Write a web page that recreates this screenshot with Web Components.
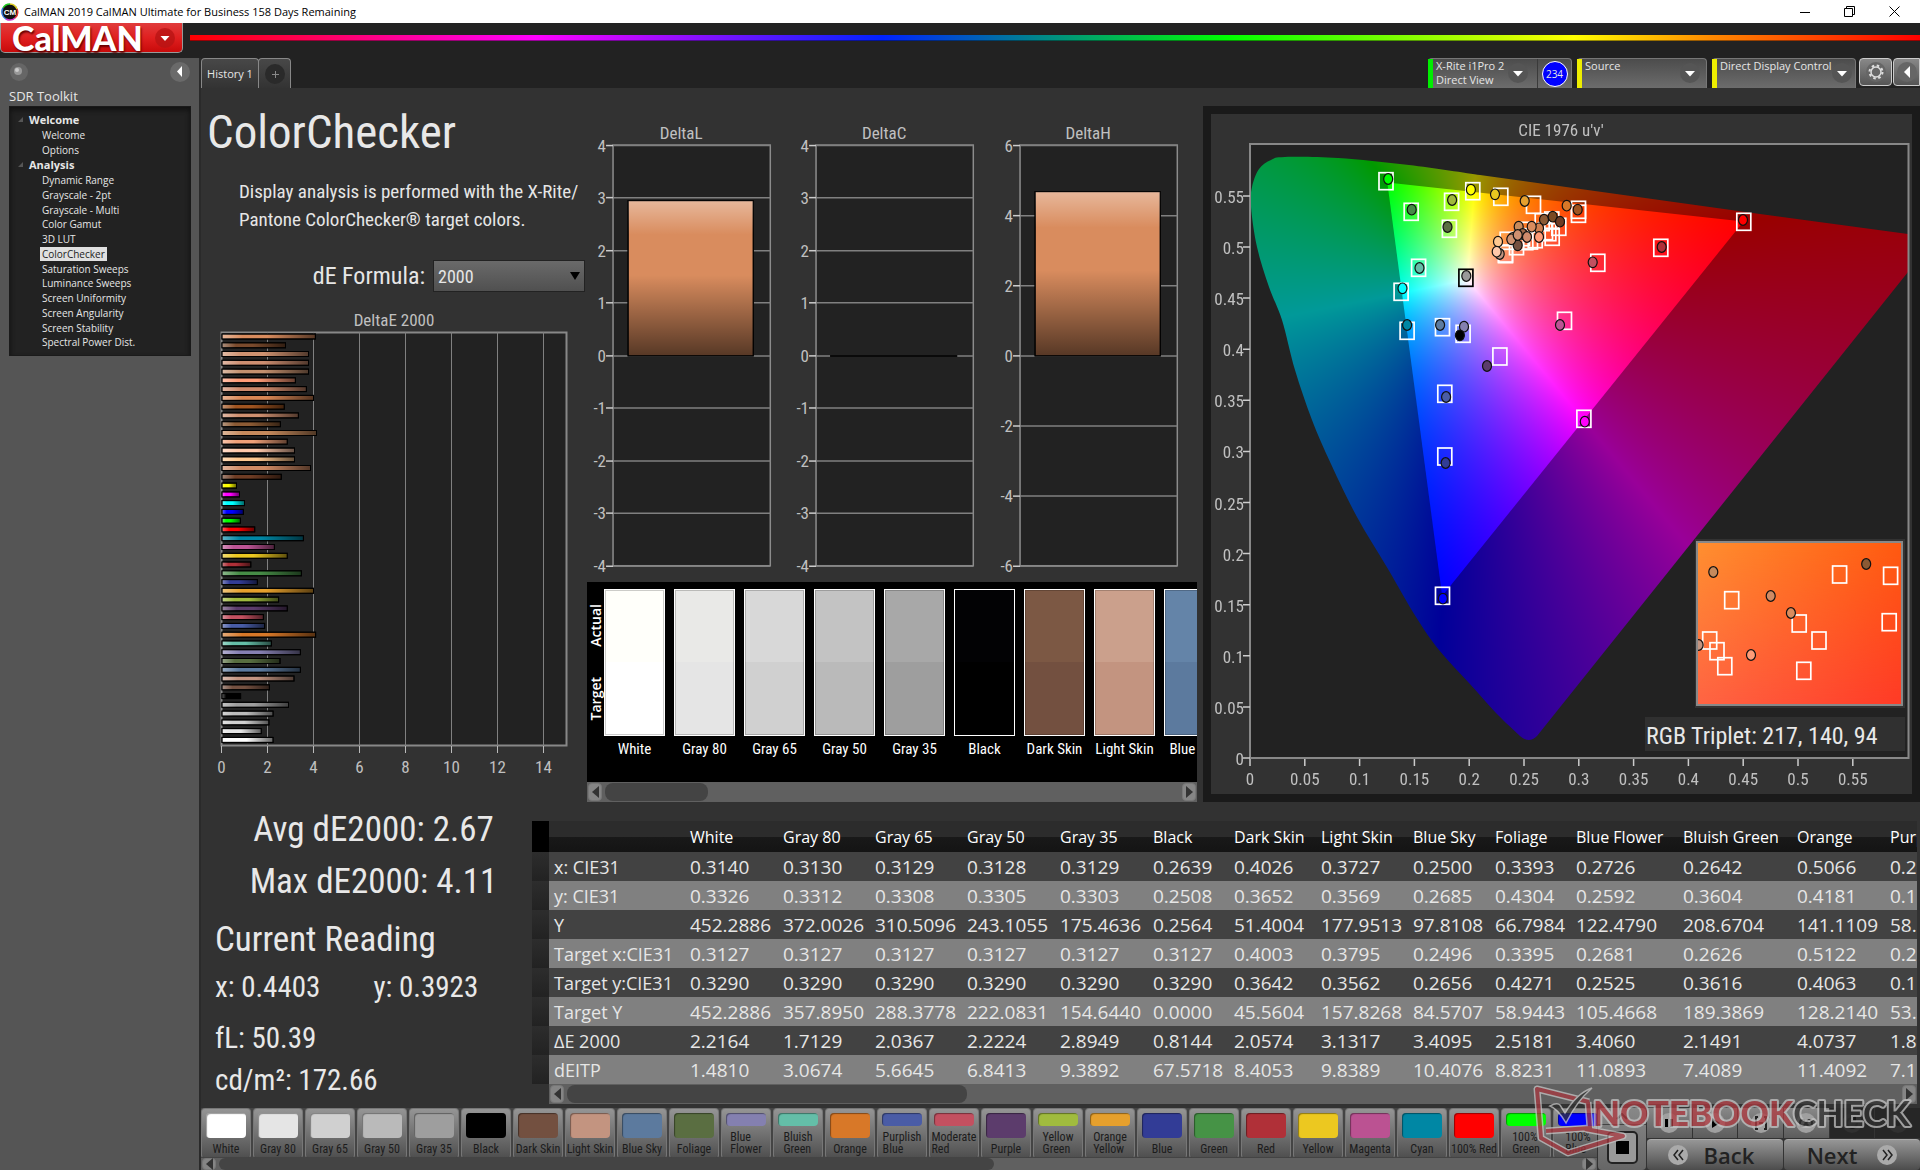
<!DOCTYPE html>
<html lang="en">
<head>
<meta charset="utf-8">
<title>CalMAN 2019 CalMAN Ultimate for Business 158 Days Remaining</title>
<style>
html,body{height:100%}
body{margin:0;background:#222;overflow:hidden;
--narrow:"Roboto Condensed","Open Sans Condensed",sans-serif;
--wide:"Open Sans","Noto Sans",sans-serif;
font-family:var(--narrow);color:#e6e6e6}
</style>
</head>
<body>
<calman-app></calman-app>
<script>
const BASE='*{box-sizing:border-box}button,select{font:inherit;color:inherit;margin:0;padding:0;border:0;background:none}';
function define(name,css,html,after){
  customElements.define(name,class extends HTMLElement{
    connectedCallback(){
      if(this.shadowRoot)return;
      const r=this.attachShadow({mode:'open'});
      r.innerHTML='<style>'+BASE+css+'</style>'+(typeof html==='function'?html(this):html);
      if(after)after(r,this);
    }
  });
}
const SHADE=(id,vert)=>`<linearGradient id="${id}" x1="0" y1="0" x2="${vert?0:1}" y2="${vert?1:0}"><stop offset="0" stop-color="#fff" stop-opacity=".38"/><stop offset=".22" stop-color="#fff" stop-opacity="0"/><stop offset=".48" stop-color="#000" stop-opacity="0"/><stop offset="1" stop-color="#000" stop-opacity=".6"/></linearGradient>`;

/* window title bar */
define('title-bar',`:host{display:flex;align-items:center;height:23px;background:#fff;color:#000;font:11px/23px var(--wide)}
svg{display:block}.n{margin-left:5px;flex:1}nav{display:flex}button{width:45px;height:23px;display:flex;align-items:center;justify-content:center}nav{margin-right:3px}`,
`<svg width="18" height="18" viewBox="0 0 18 18" style="margin-left:1px"><circle cx="9" cy="9" r="8" fill="#111"/><g fill="none" stroke-width="1.5"><path d="M2 5A8 8 0 0 1 9 1" stroke="#2c2"/><path d="M9 1A8 8 0 0 1 16 6" stroke="#dc2"/><path d="M16 6A8 8 0 0 1 14 15" stroke="#d33"/><path d="M14 15A8 8 0 0 1 5 16" stroke="#c3c"/><path d="M5 16A8 8 0 0 1 2 5" stroke="#37d"/></g><text x="9" y="12" text-anchor="middle" font-size="8" font-weight="700" fill="#fff" font-family="Liberation Sans">CM</text></svg>
<span class="n">CalMAN 2019 CalMAN Ultimate for Business 158 Days Remaining</span>
<nav><button aria-label="Minimize"><svg width="10" height="10"><path d="M0 5.500h10" stroke="#000"/></svg></button>
<button aria-label="Restore"><svg width="11" height="11" fill="none" stroke="#000"><path d="M.5 2.500h8v8h-8zM2.500 2.500v-2h8v8h-2"/></svg></button>
<button aria-label="Close"><svg width="11" height="11" stroke="#000"><path d="M.5.5l10 10M10.500.5l-10 10"/></svg></button></nav>`);

/* brand button and rainbow rule */
define('brand-bar',`:host{display:flex;height:35px;gap:7px;background:#222}
button{width:183px;height:30px;border:1px solid #999;border-top:0;border-radius:0 0 5px 5px;background:linear-gradient(#e03c3c,#e02020 50%,#c80a0a);color:#fff;font:900 34px/28px Lato,"Noto Sans",sans-serif;display:flex;align-items:center;justify-content:space-between;padding:0 7px 0 11px;text-shadow:1px 2px 2px #600}
svg{display:block}hr{flex:1;border:0;margin:12px 0 0;height:6px;border-bottom:1px solid #0006;background:linear-gradient(90deg,#f00,#f0f 20%,#02f 40%,#0f0 60%,#ff0 80%,#f80 88%,#f00)}`,
`<button><span>CalMAN</span><svg width="20" height="20"><circle cx="10" cy="10" r="10" fill="#b81414" opacity=".8"/><path d="M5.500 8h9l-4.500 5z" fill="#fff"/></svg></button><hr>`);

/* left navigation */
define('tool-tree',`:host{display:block;background:#555;padding:4px 9px 0 9px;width:201px;border-right:2px solid #2a2a2a}
.top{display:flex;justify-content:space-between;align-items:center;height:20px}svg{display:block}
h2{font:400 13px/18px var(--wide);margin:5px 0 1px}
.box{background:#222;border:1px solid #1a1a1a;box-shadow:inset 0 3px 5px #111;padding:5px 0 5px;width:182px}
h3{font:700 11px/15px var(--wide);margin:0;padding-left:8px;display:flex;align-items:center;gap:6px}
ul{list-style:none;margin:1px 0 0;padding:0 0 0 30px;display:grid;justify-items:start}
.w{height:29px}.a{height:177px}a{display:block;font:10px/14px var(--wide);color:#e6e6e6;text-decoration:none;padding:0 2px}a.on{background:#e0e0e0;color:#222}`,
()=>{const t='<svg width="5" height="5"><path d="M5 0v5H0z" fill="#555"/></svg>';
const li=a=>a.map(x=>`<li><a href="#"${x==='ColorChecker'?' class="on"':''}>${x}</a></li>`).join('');
return `<div class="top"><svg width="20" height="20"><circle cx="10" cy="10" r="9" fill="#666"/><circle cx="9" cy="9" r="4" fill="#999"/><circle cx="8" cy="8" r="2" fill="#ccc"/></svg><button aria-label="Collapse"><svg width="20" height="20"><circle cx="10" cy="10" r="10" fill="#6a6a6a"/><path d="M12 4v11L7 9.500z" fill="#fff"/></svg></button></div>
<h2>SDR Toolkit</h2><div class="box"><h3>${t}Welcome</h3><ul class="w">${li(['Welcome','Options'])}</ul><h3>${t}Analysis</h3><ul class="a">${li(['Dynamic Range','Grayscale - 2pt','Grayscale - Multi','Color Gamut','3D LUT','ColorChecker','Saturation Sweeps','Luminance Sweeps','Screen Uniformity','Screen Angularity','Screen Stability','Spectral Power Dist.'])}</ul></div>`});

/* history tabs and device menus */
define('device-menu',`:host{display:flex;height:30px;background:linear-gradient(#4c4c4c,#6c6c6c);border:1px solid #777;border-width:1px 1px 0 0;border-radius:4px 4px 0 0;font:11px/14px var(--wide)}
i{width:5px;background:var(--c);flex:none}button{flex:1;display:flex;text-align:left;padding:0 6px 0 3px;justify-content:space-between;white-space:pre}svg{display:block;margin-top:4px;flex:none}.b{border-left:1px solid #3a3a3a;width:34px;display:flex;justify-content:center;align-items:center}.b b{font:10px/24px var(--wide);width:26px;height:26px;border-radius:50%;background:#00f;border:1px solid #fff;text-align:center}:host([badge]) button{padding-right:9px}`,
e=>`<i></i><button><span>${e.getAttribute('label').replace('|','\n')}</span><svg width="20" height="20"><circle cx="10" cy="10" r="10" fill="#555"/><path d="M5 8h10l-5 5.500z" fill="#fff"/></svg></button>${e.hasAttribute('badge')?`<span class="b"><b>${e.getAttribute('badge')}</b></span>`:''}`);
define('tab-strip',`:host{display:flex;height:30px;background:#222;justify-content:space-between}
div{display:flex}.l button{height:30px;border:1px solid #888;border-bottom:0;border-radius:4px 4px 0 0;background:linear-gradient(#484848,#333);font:11px/28px var(--wide);width:58px}.l button+button{width:33px;margin-left:-1px;display:flex;align-items:center;justify-content:center}
.r{gap:5px}.r>button{height:28px;width:33px;border:1px solid #ccc;border-radius:4px;background:linear-gradient(#888,#555);display:flex;align-items:center;justify-content:center;margin-left:-2px}.r>button+button{width:27px;margin-left:-4px;border-radius:4px 0 0 4px}
#m{width:144px}#s{width:130px}#d{width:144px}`,
`<div class="l"><button>History 1</button><button aria-label="Add"><svg width="20" height="20"><circle cx="10" cy="10" r="10" fill="#2a2a2a"/><path d="M7 10.500h7M10.500 7v7" stroke="#888"/></svg></button></div>
<div class="r"><device-menu id="m" label="X-Rite i1Pro 2|Direct View" badge="234" style="--c:#0e0"></device-menu><device-menu id="s" label="Source" style="--c:#ee0"></device-menu><device-menu id="d" label="Direct Display Control" style="--c:#ee0"></device-menu>
<button aria-label="Settings"><svg width="22" height="22"><circle cx="11" cy="11" r="10" fill="#666"/><circle cx="11" cy="11" r="5" fill="none" stroke="#ddd" stroke-width="1.500"/><circle cx="11" cy="11" r="6.500" fill="none" stroke="#ddd" stroke-width="2" stroke-dasharray="2.500 2.600"/></svg></button>
<button aria-label="Collapse"><svg width="20" height="20"><circle cx="10" cy="10" r="10" fill="#666"/><path d="M13 4v12L7 10z" fill="#fff"/></svg></button></div>`);

/* horizontal bar chart of DeltaE */
const DE=[['#d98c5e',4.06],['#7a4a2c',2.76],['#cf9270',3.76],['#cd8e70',3.76],['#c4906e',3.76],['#ff9c78',3.19],['#cf8a6c',3.67],['#d88654',3.98],['#a05420',2.71],['#cf9070',3.32],['#8b5a34',2.54],['#c68a5c',4.11],['#f0a078',2.84],['#ffc8aa',3.15],['#ffc890',3.15],['#cf8a64',3.85],['#6e3c24',2.58],['#ff0',.63],['#f0f',.76],['#0ff',.98],['#00f',.93],['#0f0',.8],['#f00',1.42],['#0086a4',3.54],['#bc5494',2.28],['#ecc820',2.84],['#b03038',1.25],['#468c46',3.45],['#323c96',1.54],['#e6a02d',3.98],['#a0bb3e',2.46],['#5c3c6c',2.84],['#c35060',1.8],['#485ca6',1.85],['#d87828',4.07],['#64bea8',2.15],['#8680b2',3.41],['#586e40',2.52],['#5c7ba0',3.41],['#c39480',3.13],['#745040',2.06],['#000',.81],['#9f9f9f',2.89],['#bbb',2.22],['#d0d0d0',2.04],['#e6e6e6',1.71],['#fff',2.22]];
define('delta-e-chart',`:host{display:block}svg{display:block;width:100%;height:auto}text{font:400 17px var(--narrow);fill:#c0c0c0;text-anchor:middle}`,()=>{
const X=v=>20.5+v*23;let s=`<svg viewBox="0 0 386 478"><defs>${SHADE('g')}</defs><text x="193" y="18">DeltaE 2000</text><rect x="20.500" y="24.500" width="345" height="413" fill="#222" stroke="#888" stroke-width="2"/>`;
for(let v=0;v<15;v+=2)s+=`<path d="M${X(v)} 24V445" stroke="#808080" stroke-width="${v?1:0}"/><path d="M${X(v)} 438v7" stroke="#bbb"/><text x="${X(v)}" y="465">${v}</text>`;
DE.forEach(([c,v],i)=>{const y=28.5+i*8.77-2.500;for(const f of [c,'url(#g)'])s+=`<rect x="21" y="${y.toFixed(1)}" width="${(v*23).toFixed(1)}" height="5" fill="${f}" stroke="#000"/>`});
return s+'</svg>'});

/* vertical delta charts */
define('delta-chart',`:host{display:block}svg{display:block;width:100%;height:auto}text{font:400 17px var(--narrow);fill:#c0c0c0}`,e=>{
const m=+e.getAttribute('max'),st=+e.getAttribute('step'),v=+e.getAttribute('value'),Y=n=>Math.round(240.500-n/m*210)+.5;
let s=`<svg viewBox="0 0 203 467"><defs>${SHADE('g',1)}</defs><text x="94" y="25" text-anchor="middle">${e.getAttribute('label')}</text><rect x="26" y="31" width="157" height="420" fill="#222" stroke="#8c8c8c" stroke-width="1.500"/>`;
for(let n=m;n>=-m;n-=st)s+=`<path d="M26 ${Y(n)}H183" stroke="#808080" stroke-width="1.500"/><path d="M19 ${Y(n)}h7" stroke="#ccc" stroke-width="1.500"/><text x="19" y="${Y(n)+6}" text-anchor="end">${n}</text>`;
if(v)for(const f of ['#d98c5e','url(#g)'])s+=`<rect x="41" y="${Y(v)}" width="125" height="${Y(0)-Y(v)}" fill="${f}" stroke="#000"/>`;
else s+=`<path d="M40 ${Y(0)}h127" stroke="#0a0a0a" stroke-width="2"/>`;
return s+'</svg>'});

define('scroll-bar',`:host{display:flex;background:#606060;height:20px;padding:1px;gap:3px;align-items:stretch}
button{width:14px;background:#858585;border-radius:4px;border:1px solid #777;display:flex;align-items:center;justify-content:center}div{flex:1}i{display:block;height:100%;width:var(--t);background:#444;border-radius:8px}`,
`<button aria-label="Scroll left"><svg width="7" height="12" viewBox="0 0 7 12"><path d="M7 0v12L0 6z" fill="#333"/></svg></button><div><i></i></div><button aria-label="Scroll right"><svg width="7" height="12" viewBox="0 0 7 12"><path d="M0 0v12l7-6z" fill="#333"/></svg></button>`);

/* actual versus target swatches */
define('swatch-compare',`:host{display:block;background:#000}
.v{display:flex;height:200px;overflow:hidden;padding-top:7px}.s{width:17px;flex:none;height:147px;display:flex;flex-direction:column-reverse;justify-content:space-around;align-items:center;font:600 14px/17px var(--wide);color:#fff}.s span{writing-mode:vertical-rl;transform:rotate(180deg)}
figure{margin:0 9px 0 0;width:61px;flex:none;text-align:center}.c{height:147px;border:1px solid #fff;background:linear-gradient(var(--a) 50%,var(--b) 50%);box-shadow:inset 0 0 0 1px #0003}figcaption{font:400 15px/26px var(--narrow);color:#fff;white-space:nowrap}`,
()=>`<div class="v"><div class="s"><span>Target</span><span>Actual</span></div>${[['White','#fffffa','#fff'],['Gray 80','#e9e9e7','#e5e5e5'],['Gray 65','#d8d8d8','#d0d0d0'],['Gray 50','#c3c3c3','#bababa'],['Gray 35','#a8a8a8','#9e9e9e'],['Black','#020204','#000'],['Dark Skin','#7c5844','#735040'],['Light Skin','#cba08c','#c39480'],['Blue Sky','#6484a8','#5c7a9e']].map(a=>`<figure><div class="c" style="--a:${a[1]};--b:${a[2]}"></div><figcaption>${a[0]}</figcaption></figure>`).join('')}</div><scroll-bar style="--t:18%"></scroll-bar>`);

/* CIE 1976 diagram */
const SX=x=>x/2.178-11,SY=y=>y/3-74;
const P=(x,y)=>[SX(x),SY(y)],Q=(x,y)=>[x/3+269,y/3+56],R=(x,y)=>[SX(x),y/3+306];
const SQ=[P(404,422),P(459,514),P(547,484),P(593,452),Q(61,79),Q(159,103),Q(294,118),Q(294,130),P(542,565),P(475,682),P(437,754),P(450,871),P(527,860),P(572,880),P(652,948),P(532,1060),R(532,108),R(527,526),P(835,1135),Q(252,451),Q(352,277),Q(541,232),Q(790,154),Q(185,155),Q(214,150),Q(235,169),Q(215,199),Q(205,185),Q(195,182),Q(164,206),Q(150,210),Q(136,212),Q(126,200),Q(108,227),Q(75,249),Q(75,251),Q(80,211),Q(134,181)];
const CI=[[P(410,417),'#0f0'],[P(461,509),'#468c46'],[P(549,480),'#a0b93c'],[P(590,449),'#ff0'],[P(539,561),'#5a6e41'],[P(478,684),'#64bea8'],[P(441,745),'#0ff'],[P(451,855),'#0087a4'],[P(523,855),'#5c7ba0'],[P(575,860),'#8480b0'],[P(566,886),'#000'],[P(625,978),'#5c3c6c'],[P(536,1071),'#4a5ca6'],[R(535,129),'#323c96'],[R(529,536),'#00f'],[P(838,1145),'#f0f'],[P(580,708),'#999'],[Q(45,73),'#e8c820'],[Q(134,93),'#e6a02d'],[Q(260,107),'#d87828'],[Q(293,119),'#a05420'],[Q(192,149),'#8b5a34'],[Q(218,140),'#7a4a24'],[Q(240,155),'#6e3c24'],[Q(116,170),'#c68a5c'],[Q(177,175),'#d08050'],[Q(155,170),'#d98c5e'],[Q(128,192),'#a06848'],[Q(54,215),'#ffc890'],[Q(59,252),'#c39480'],[Q(50,245),'#ffc8aa'],[Q(98,204),'#c4906e'],[Q(113,226),'#745040'],[Q(94,208),'#cf9270'],[Q(113,195),'#cf9070'],[Q(141,201),'#cf8a6c'],[Q(177,201),'#ff9c78'],[Q(338,277),'#c35060'],[Q(545,231),'#b03038'],[Q(789,150),'#f00'],[Q(240,465),'#bc5494']];
const ISQ=[[1392,462],[1503,466],[1157,539],[1304,609],[1500,605],[1347,660],[1109,660],[1125,692],[1142,737],[1314,751]],ICI=[[1118,456,'#c68a5c'],[1451,432,'#8b5a34'],[1243,528,'#cf8a64'],[1287,579,'#d98c5e'],[1200,705,'#ff9c78'],[1086,675,'#c39480']];
/* smooth curve through the spectral locus, from the red end round to the violet tip */
const LP=[[269,61],[198,51],[127,44],[74,43],[60,46],[48,55],[41,73],[40,93],[46,133],[58,173],[71,206],[84,256],[101,306],[120,350],[146,403],[177,455],[205,503],[228,536],[258,569],[285,599],[309,622]];
const LOCUS=new Path2D('M549 100L'+LP[0]+LP.slice(1).map((p,i)=>{const a=LP[i-1]||LP[0],b=LP[i],d=LP[i+2]||p;return `C${b[0]+(p[0]-a[0])/6} ${b[1]+(p[1]-a[1])/6} ${p[0]-(d[0]-b[0])/6} ${p[1]-(d[1]-b[1])/6} ${p[0]} ${p[1]}`}).join('')+'Q318 630 326 622L697 158V120Z');
define('cie-diagram',`:host{display:grid;border:8px solid #1a1a1a;background:#323232}
canvas,svg{grid-area:1/1;display:block;width:100%;height:auto}text{font:400 17px var(--narrow);fill:#c0c0c0}.rgb{font-size:24px;fill:#e8e8e8}`,()=>{
const X=u=>39+u*1096,Y=v=>644-v*1022,sq=([x,y],c='#fff')=>`<rect x="${(x-6.500).toFixed(1)}" y="${(y-8).toFixed(1)}" width="14" height="17" fill="none" stroke="${c}" stroke-width="1.700"/>`,ci=([x,y],c)=>`<ellipse cx="${x.toFixed(1)}" cy="${y.toFixed(1)}" rx="4.500" ry="5.300" fill="${c}" stroke="#111" stroke-width="1.200"/>`;
let s=`<canvas width="701" height="680"></canvas><svg viewBox="0 0 701 680"><defs><linearGradient id="a" x1="0" x2="1" y1="0" y2="0"><stop stop-color="#ff9030"/><stop offset="1" stop-color="#ff5a10"/></linearGradient><linearGradient id="b" x1="0" x2="1" y1="0" y2="0"><stop stop-color="#ff6444"/><stop offset="1" stop-color="#ff3a26"/></linearGradient><linearGradient id="f" x1="0" y1="0" x2="0" y2="1"><stop stop-color="#000"/><stop offset="1" stop-color="#fff"/></linearGradient><mask id="m"><rect x="486" y="428" width="205" height="163" fill="url(#f)"/></mask><clipPath id="k"><rect x="487" y="429" width="203" height="161"/></clipPath></defs>
<rect x="39" y="30" width="658.500" height="614" fill="none" stroke="#888" stroke-width="2"/><text x="350" y="22" text-anchor="middle">CIE 1976 u'v'</text>`;
for(let i=0;i<12;i++){const n=String(+(i*.05).toFixed(2));s+=`<path d="M${X(i*.05)} 645v7M32 ${Y(i*.05)}h7" stroke="#ccc" stroke-width="1.500"/><text x="${X(i*.05)}" y="671" text-anchor="middle">${n}</text><text x="33" y="${Y(i*.05)+7}" text-anchor="end">${n}</text>`}
SQ.forEach(p=>s+=sq(p));s+=sq(P(578,712),'#000');CI.forEach(([p,c])=>s+=ci(p,c));
s+=`<rect x="484" y="425" width="210" height="169" fill="#323232"/><rect x="486" y="428" width="205" height="163" fill="url(#a)"/><rect x="486" y="428" width="205" height="163" fill="url(#b)" mask="url(#m)"/><g clip-path="url(#k)">`;
ISQ.forEach(a=>s+=sq(R(a[0],a[1])));ICI.forEach(a=>s+=ci(R(a[0],a[1]),a[2]));
return s+`</g><rect x="486" y="428" width="205" height="163" fill="none" stroke="#888" stroke-width="2"/><rect x="434" y="603" width="260" height="34" fill="#303030"/><text class="rgb" x="435" y="630">RGB Triplet: 217, 140, 94</text></svg>`},
r=>{const W=701,H=680,c=r.querySelector('canvas').getContext('2d');
const T=[[176.3,68.5],[532.5,107.5],[231.2,482]],wx=255.8,wy=165.4;
/* beyond the display gamut a pixel takes the hue of the gamut edge that lies towards white */
const edge=(i,j)=>{const dx=i-wx,dy=j-wy;let t=1;for(let n=0;n<3;n++){const [ax,ay]=T[n],[bx,by]=T[(n+1)%3],ex=bx-ax,ey=by-ay,q=dx*ey-dy*ex;if(!q)continue;const k=((ax-wx)*ey-(ay-wy)*ex)/q;if(k>0&&k<t)t=k}return [wx+dx*t,wy+dy*t]};
const layer=(k,outer)=>{const t=document.createElement('canvas');t.width=W;t.height=H;const g=t.getContext('2d'),im=g.createImageData(W,H),d=im.data;
for(let j=0;j<H;j++)for(let i=0;i<W;i++){const [a,b]=outer?edge(i,j):[i,j],u=(a-39)/1096,v=Math.max(.002,(644-b)/1022),x=9*u/(4*v),z=(12-3*u-20*v)/(4*v);
const q=[3.2406*x-1.5372-.4986*z,-.9689*x+1.8758+.0415*z,.0557*x-.204+1.057*z].map(n=>Math.max(0,n)),m=Math.max(...q)||1,o=(j*W+i)*4;
for(let n=0;n<3;n++)d[o+n]=255*k*q[n]/m;d[o+3]=255}
g.putImageData(im,0,0);g.globalCompositeOperation='destination-in';return [t,g]};
c.fillStyle='#222';c.fillRect(39,30,658,614);
const [a,ga]=layer(.6,true);ga.fill(LOCUS);c.drawImage(a,0,0);
const [b,gb]=layer(1,false);gb.beginPath();T.forEach(p=>gb.lineTo(...p));gb.fill();c.drawImage(b,0,0)});

/* readings table */
define('reading-table',`:host{display:block;overflow:hidden;font-family:var(--wide)}
.v{overflow:hidden}table{border-collapse:collapse;table-layout:fixed;width:1462px}th,td{text-align:left;font-weight:400;padding:2px 0 0 4px;white-space:nowrap;font-size:19px;line-height:27px;height:29px}
thead th{height:31px;font-size:16px;line-height:29px;background:linear-gradient(#2c2c2c 50%,#191919 50%,#141414);color:#fff}thead th:first-child{background:#000}
tbody tr{background:#424242}tbody tr:nth-child(even){background:#808080}tbody td:first-child{background:linear-gradient(#2d2d2d,#222)}tbody th{font-size:18px;padding-left:5px}
scroll-bar{margin-left:17px;--t:30%}`,
()=>{const w=[17,137,93,92,92,93,93,81,87,92,82,81,107,114,93,108];
const h=['','','White','Gray 80','Gray 65','Gray 50','Gray 35','Black','Dark Skin','Light Skin','Blue Sky','Foliage','Blue Flower','Bluish Green','Orange','Purplish Blue'];
const rows=['x: CIE31,0.3140,0.3130,0.3129,0.3128,0.3129,0.2639,0.4026,0.3727,0.2500,0.3393,0.2726,0.2642,0.5066,0.2','y: CIE31,0.3326,0.3312,0.3308,0.3305,0.3303,0.2508,0.3652,0.3569,0.2685,0.4304,0.2592,0.3604,0.4181,0.18','Y,452.2886,372.0026,310.5096,243.1055,175.4636,0.2564,51.4004,177.9513,97.8108,66.7984,122.4790,208.6704,141.1109,58.5','Target x:CIE31,0.3127,0.3127,0.3127,0.3127,0.3127,0.3127,0.4003,0.3795,0.2496,0.3395,0.2681,0.2626,0.5122,0.2','Target y:CIE31,0.3290,0.3290,0.3290,0.3290,0.3290,0.3290,0.3642,0.3562,0.2656,0.4271,0.2525,0.3616,0.4063,0.19','Target Y,452.2886,357.8950,288.3778,222.0831,154.6440,0.0000,45.5604,157.8268,84.5707,58.9443,105.4668,189.3869,128.2140,53.','ΔE 2000,2.2164,1.7129,2.0367,2.2224,2.8949,0.8144,2.0574,3.1317,3.4095,2.5181,3.4060,2.1491,4.0737,1.85','dEITP,1.4810,3.0674,5.6645,6.8413,9.3892,67.5718,8.4053,9.8389,10.4076,8.8231,11.0893,7.4089,11.4092,7.18'];
return `<div class="v"><table><colgroup>${w.map(x=>`<col style="width:${x}px">`).join('')}</colgroup><thead><tr>${h.map(x=>`<th>${x}</th>`).join('')}</tr></thead><tbody>${rows.map(r=>'<tr><td></td>'+r.split(',').map((c,i)=>i?`<td>${c}</td>`:`<th>${c}</th>`).join('')+'</tr>').join('')}</tbody></table></div><scroll-bar></scroll-bar>`});

define('reading-summary',`:host{display:block;padding:2px 0 0 14px;color:#e8e8e8}p,h2{margin:0;font-weight:400;white-space:nowrap}
.b{font-size:35px;line-height:52px;text-align:center}h2{font-size:35px;line-height:50px;margin-top:7px}.x{display:flex;font-size:29px;line-height:44px}.x span{width:161px}.l{font-size:29px;line-height:42px}.x+.l{margin-top:8px}`,
`<p class="b">Avg dE2000: 2.67</p><p class="b">Max dE2000: 4.11</p><h2>Current Reading</h2><p class="x"><span>x: 0.4403</span><span>y: 0.3923</span></p><p class="l">fL: 50.39</p><p class="l">cd/m²: 172.66</p>`);

/* patch buttons along the bottom */
define('patch-bar',`:host{display:flex;flex-direction:column;overflow:hidden;background:#444}
.r{display:flex;gap:2px;overflow:hidden;height:50px}button{width:50px;flex:none;height:50px;border-radius:4px 4px 3px 3px;background:linear-gradient(#959595,#505050);border:1px solid #777;border-bottom-color:#444;display:flex;flex-direction:column;align-items:center;padding-top:4px;justify-content:space-between;color:#1c1c1c;font:400 12px/12px var(--narrow)}
i{width:40px;flex:1;background:var(--c);border-radius:4px;box-shadow:inset 1px 1px 1px #0006}span{white-space:pre;padding:5px 0 2px;text-align:left}
scroll-bar{height:12px;--t:57%;padding:0 1px}`,
()=>{const c=[['White','#fff'],['Gray 80','#e5e5e5'],['Gray 65','#d0d0d0'],['Gray 50','#bababa'],['Gray 35','#9e9e9e'],['Black','#000'],['Dark Skin','#735040'],['Light Skin','#c39480'],['Blue Sky','#5c7a9e'],['Foliage','#5a6e41'],['Blue\nFlower','#8480b0'],['Bluish\nGreen','#64bea8'],['Orange','#d87828'],['Purplish\nBlue','#4a5ca6'],['Moderate\nRed','#c35060'],['Purple','#5c3c6c'],['Yellow\nGreen','#a0bb3e'],['Orange\nYellow','#e6a02d'],['Blue','#323c96'],['Green','#469346'],['Red','#b03038'],['Yellow','#ecc820'],['Magenta','#bb5292'],['Cyan','#0087a4'],['100% Red','#f00'],['100%\nGreen','#0f0'],['100%\nBlue','#00f']];
return `<div class="r">${c.map(a=>`<button style="--c:${a[1]}"><i></i><span>${a[0]}</span></button>`).join('')}</div><scroll-bar></scroll-bar>`});

/* transport controls */
define('transport-panel',`:host{display:grid;grid-template-columns:48px 1fr;gap:1px;background:#333}
.p{background:linear-gradient(#888,#666);display:flex;flex-direction:column;align-items:center;gap:6px;border-radius:4px}.p button{height:17px;width:100%;border-bottom:1px solid #444;display:flex;justify-content:center;align-items:center}.p button+button{width:31px;height:33px;border:2px solid #222;border-radius:5px;background:#999}svg{display:block}
.t{display:grid;grid-template-columns:repeat(6,1fr);gap:1px;height:30px}.t button{background:linear-gradient(#888,#5c5c5c);display:flex;align-items:center;justify-content:center}.t button:nth-child(n+5){background:#262626}
.n{display:grid;grid-template-columns:1fr 1fr;gap:1px;height:31px;margin-top:1px}.n button{background:linear-gradient(#969696,#4c4c4c);border-top:1px solid #aaa;border-radius:4px;display:flex;align-items:center;justify-content:center;gap:16px;color:#222;font:600 22px/28px var(--wide)}.n button:first-child{padding-right:8px}.n button:last-child{gap:20px}`,
()=>{const ic=['<path d="M6 6h3v8H6zM11 6h3v8h-3z"/>','<path d="M7 5l8 5-8 5z"/>','<path d="M7 4H5v12h2M13 4h2v12h-2M8 10h4" stroke="#222" stroke-width="2" fill="none"/>','<path d="M10 10c2-4 6-4 6 0s-4 4-6 0-6-4-6 0 4 4 6 0" stroke="#222" stroke-width="2" fill="none"/>','<path d="M15 10a5 5 0 1 1-2-4M13 3v4h-4" stroke="#181818" stroke-width="2" fill="none"/>','<circle cx="10" cy="10" r="3" fill="#222"/>'];
const ch=d=>`<svg width="20" height="20"><circle cx="10" cy="10" r="10" fill="#aaa"/><path d="${d}" fill="none" stroke="#222" stroke-width="1.500"/></svg>`;
return `<div class="p"><button aria-label="Expand"><svg width="12" height="7"><path d="M1 6l5-5 5 5" stroke="#222" fill="none" stroke-width="2"/></svg></button><button aria-label="Stop"><svg width="27" height="27"><path d="M7 7h13v13H7z"/></svg></button></div><div><div class="t">${ic.map((p,i)=>`<button aria-label="Control ${i+1}"><svg width="20" height="20"><circle cx="10" cy="10" r="10" fill="${i>3?'#303030':'#a0a0a0'}"/>${p}</svg></button>`).join('')}</div><div class="n"><button>${ch('M10 5l-4 5 4 5M15 5l-4 5 4 5')}Back</button><button>Next${ch('M6 5l4 5-4 5M11 5l4 5-4 5')}</button></div></div>`});

define('site-mark',`:host{display:block;position:fixed;right:9px;bottom:7px;width:378px;height:78px;opacity:.75;pointer-events:none}svg{display:block;overflow:visible}text{font:900 35px Lato,sans-serif;paint-order:stroke;stroke:#c4c4c4;stroke-width:4px;stroke-linejoin:round}tspan{font-weight:700}`,
`<svg width="378" height="78"><g fill="none" stroke-linejoin="round"><path d="M56 17L4 4 8 53 35 68 90 51 52 44M55 17l2 26-44 3" stroke="#c4c4c4" stroke-width="7"/><path d="M56 17L4 4 8 53 35 68 90 51 52 44M55 17l2 26-44 3" stroke="#a83840" stroke-width="4"/></g><path d="M17 21q7-4 10-1l5 8Q44 8 59 3 44 16 33 38q-8-14-16-17z" fill="#333" stroke="#c4c4c4" stroke-width="1.500"/><text x="60" y="41" fill="#b03a40">NOTEBOOK<tspan fill="#303030">CHECK</tspan></text></svg>`);

define('calman-app',`:host{display:flex;flex-direction:column;height:100vh}
.body{flex:1;display:grid;grid-template-columns:201px minmax(0,1fr);min-height:0}
main{background:#323232;display:flex;flex-direction:column;min-width:0}
.up{display:grid;grid-template-columns:minmax(0,386fr) minmax(0,610fr) minmax(0,723fr);align-items:start}
.left{padding-top:14px}h1{margin:0 0 0 6px;font-weight:400;font-size:47px;line-height:60px;color:#e8e8e8;white-space:nowrap}
p{margin:16px 0 0 38px;font-size:19px;line-height:28px;white-space:nowrap}
.f{display:flex;margin:26px 2px 16px 0;justify-content:flex-end;gap:8px;align-items:center;font-size:24px;line-height:32px}
.f select{width:152px;height:32px;border:1px solid #222;background:linear-gradient(#6a6a6a,#505050);padding-left:4px;font-size:18px;appearance:none;grid-area:1/1}.sel{display:grid;align-items:center}.sel svg{grid-area:1/1;justify-self:end;margin-right:5px;pointer-events:none}
.mid{padding-top:26px}.ch{display:grid;grid-template-columns:repeat(3,1fr)}cie-diagram{margin:18px 0 0 6px}
.low{display:grid;grid-template-columns:minmax(0,331fr) minmax(0,1388fr)}reading-table{margin:19px 3px 0 0}
.bot{display:grid;grid-template-columns:minmax(0,1fr) 322px;gap:1px;margin-top:auto;height:62px}`,
`<title-bar></title-bar><brand-bar></brand-bar><div class="body"><tool-tree></tool-tree><main><tab-strip></tab-strip>
<div class="up"><section class="left"><h1>ColorChecker</h1><p>Display analysis is performed with the X-Rite/<br>Pantone ColorChecker® target colors.</p><div class="f"><label for="de">dE Formula:</label><span class="sel"><select id="de"><option>2000</option></select><svg width="10" height="8"><path d="M0 0h10L5 8z"/></svg></span></div><delta-e-chart></delta-e-chart></section>
<section class="mid"><div class="ch"><delta-chart label="DeltaL" max="4" step="1" value="2.950"></delta-chart><delta-chart label="DeltaC" max="4" step="1" value="0"></delta-chart><delta-chart label="DeltaH" max="6" step="2" value="4.670"></delta-chart></div><swatch-compare></swatch-compare></section><cie-diagram></cie-diagram></div>
<div class="low"><reading-summary></reading-summary><reading-table></reading-table></div>
<div class="bot"><patch-bar></patch-bar><transport-panel></transport-panel></div></main></div><site-mark></site-mark>`);
</script>
</body>
</html>
